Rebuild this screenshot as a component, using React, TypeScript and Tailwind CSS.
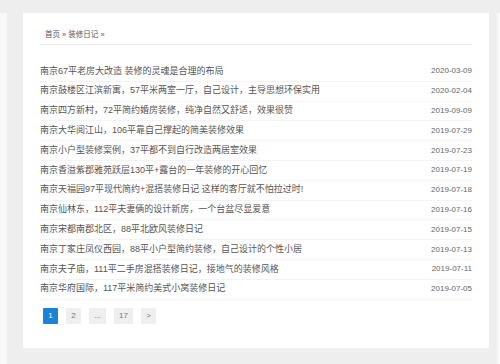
import React from "react";

const rows: [string, string][] = [
  ["南京67平老房大改造 装修的灵魂是合理的布局", "2020-03-09"],
  ["南京鼓楼区江滨新寓，57平米两室一厅，自己设计，主导思想环保实用", "2020-02-04"],
  ["南京四方新村，72平简约婚房装修，纯净自然又舒适，效果很赞", "2019-09-09"],
  ["南京大华阅江山，106平靠自己撑起的简美装修效果", "2019-07-29"],
  ["南京小户型装修案例，37平都不到自行改造两居室效果", "2019-07-23"],
  ["南京香溢紫郡雅苑跃层130平+露台的一年装修的开心回忆", "2019-07-19"],
  ["南京天福园97平现代简约+混搭装修日记 这样的客厅就不怕拉过时!", "2019-07-18"],
  ["南京仙林东，112平夫妻俩的设计新房，一个台盆尽显爱意", "2019-07-16"],
  ["南京宋都南郡北区，88平北欧风装修日记", "2019-07-15"],
  ["南京丁家庄凤仪西园，88平小户型简约装修，自己设计的个性小居", "2019-07-13"],
  ["南京夫子庙，111平二手房混搭装修日记，接地气的装修风格", "2019-07-11"],
  ["南京华府国际，117平米简约美式小窝装修日记", "2019-07-05"],
];

export default function App() {
  return (
    <div
      className="w-[500px] h-[364px] bg-[#f8f8f8] flex flex-col overflow-hidden"
      style={{ fontFamily: '"Liberation Sans", "Noto Sans CJK SC", sans-serif' }}
    >
      <div className="h-[13px] bg-[#eeeeee] shrink-0" />
      <div className="ml-[7px] mr-[3px] bg-[#eeeeee] pl-[16px] pr-[8px] pb-[16px]">
        <div className="bg-white px-[17px] pt-[16px] pb-[24px]">
          <div className="h-[16px] border-b border-[#eeeeee] pl-[5px] flex items-start">
            <span className="text-[7.5px] leading-[12px] text-[#555]">首页 » 装修日记 »</span>
          </div>
          <div className="mt-[17px] flex flex-col">
            {rows.map(([t, d]) => (
              <div
                key={d + t}
                className="h-[19.8px] border-b border-[#f3f3f3] flex items-center justify-between"
              >
                <span className="text-[9px] text-[#555] whitespace-nowrap">{t}</span>
                <span className="text-[8px] text-[#666]" style={{ fontFamily: '"Liberation Sans", sans-serif' }}>{d}</span>
              </div>
            ))}
          </div>
          <div className="mt-[8px] ml-[3px] flex items-center gap-[8px] text-[8px]">
            <span className="w-[15px] h-[16px] bg-[#1a83d9] text-white flex items-center justify-center rounded-[1px]">1</span>
            <span className="w-[15px] h-[16px] bg-[#eeeeee] text-[#777] flex items-center justify-center rounded-[1px]">2</span>
            <span className="w-[17px] h-[16px] bg-[#eeeeee] text-[#777] flex items-center justify-center rounded-[1px]">...</span>
            <span className="w-[19px] h-[16px] bg-[#eeeeee] text-[#777] flex items-center justify-center rounded-[1px]">17</span>
            <span className="w-[15px] h-[16px] bg-[#eeeeee] text-[#777] flex items-center justify-center rounded-[1px]">&gt;</span>
          </div>
        </div>
      </div>
    </div>
  );
}
